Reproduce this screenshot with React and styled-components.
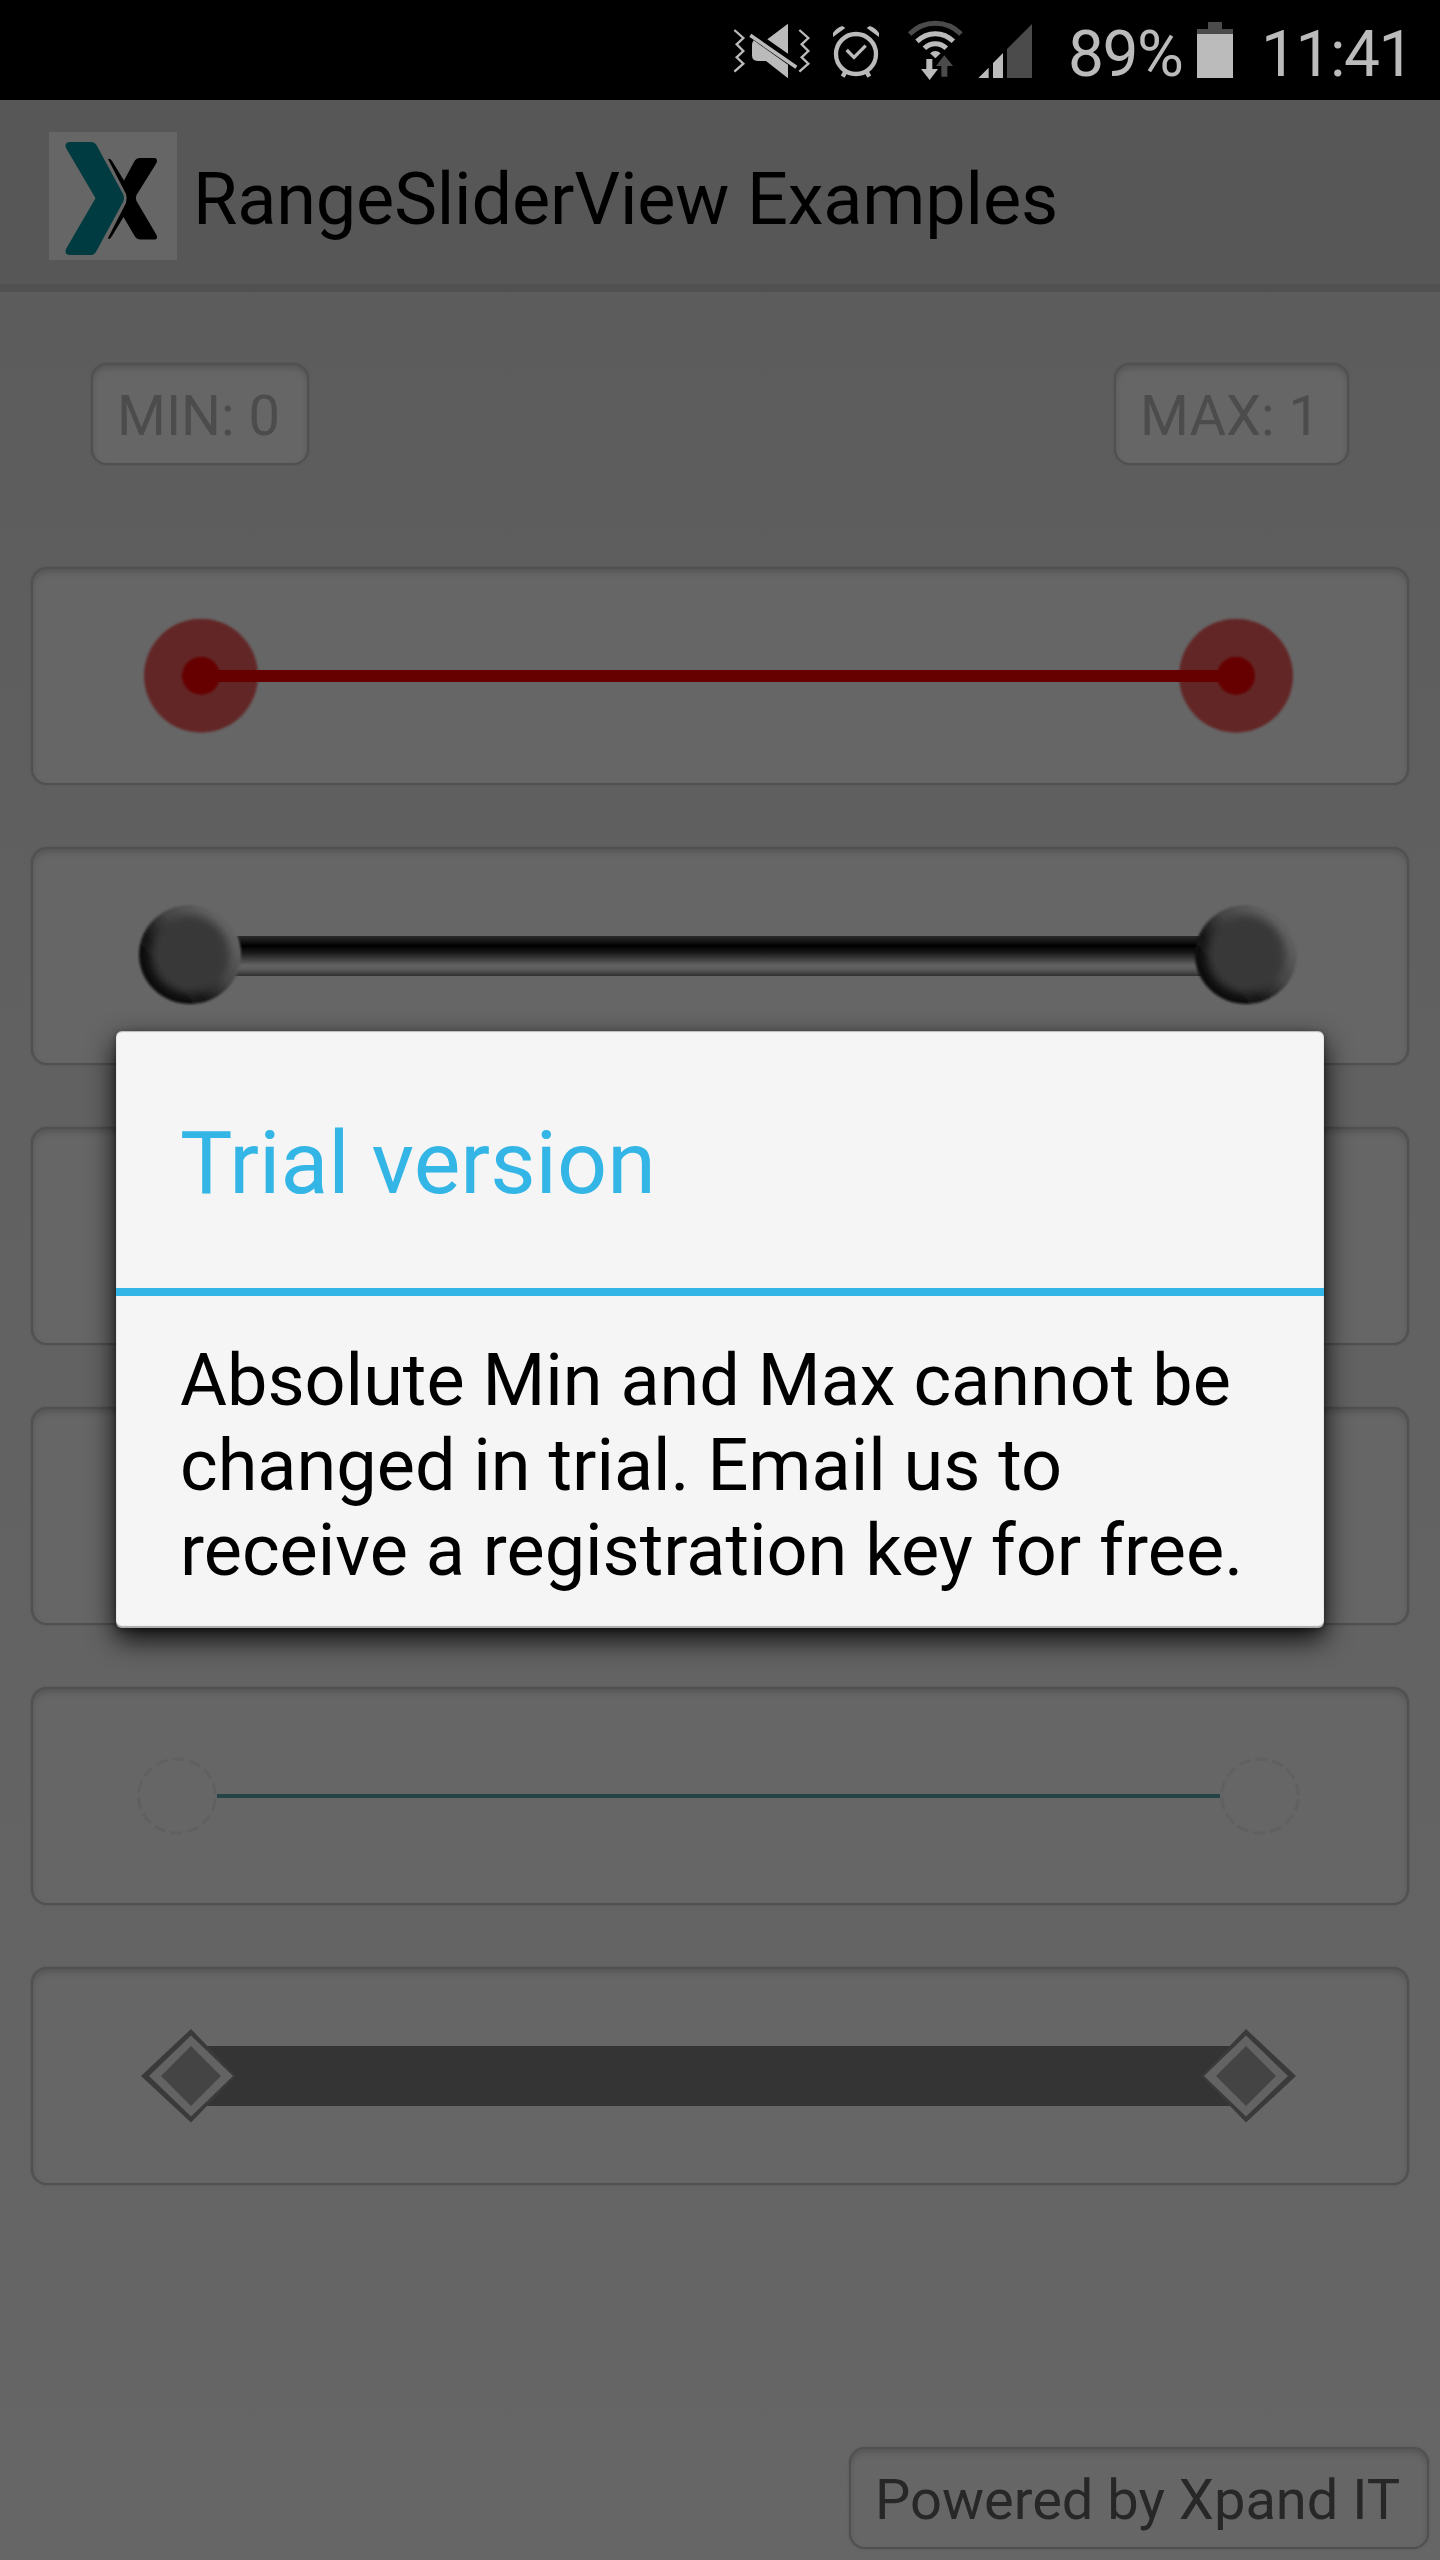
import React from "react";
import styled, { createGlobalStyle } from "styled-components";

const GlobalStyle = createGlobalStyle`
  *, *::before, *::after { box-sizing: border-box; }
  body { margin: 0; background: #000; }
  h1, h2, p { margin: 0; font-weight: 400; }
  svg { display: block; flex: none; }
`;

const Screen = styled.div`
  position: relative;
  display: flex;
  flex-direction: column;
  width: 1440px;
  height: 2560px;
  overflow: hidden;
  font-family: Roboto, "Liberation Sans", sans-serif;
  background: #626262;
`;

const StatusBar = styled.header`
  display: flex;
  align-items: flex-start;
  flex: none;
  height: 100px;
  padding: 20px 0 0 733px;
  background: #000;
  color: #bbb;
`;

const StatusGlyph = styled.svg`
  width: ${(p) => p.$width}px;
  height: 61px;
  margin-right: ${(p) => p.$gap}px;
`;

const StatusText = styled.span`
  flex: none;
  width: ${(p) => p.$width}px;
  font-size: 64px;
  line-height: 75px;
  letter-spacing: -1.5px;
  margin-top: -3px;
  white-space: nowrap;
`;

const ActionBar = styled.div`
  display: flex;
  align-items: center;
  flex: none;
  height: 192px;
  padding: 8px 0 0 49px;
  background: #575757;
  border-bottom: 8px solid #515151;
`;

const Logo = styled.svg`
  width: 128px;
  height: 128px;
  background: #666;
`;

const AppTitle = styled.h1`
  margin-left: 16px;
  padding-top: 7px;
  font-size: 72px;
  line-height: 84px;
  letter-spacing: -0.15px;
  color: #000;
  white-space: nowrap;
`;

const Content = styled.main`
  display: flex;
  flex-direction: column;
  flex: 1;
  padding: 71px 31px 11px;
  background: linear-gradient(#5c5c5c, #616161 35%, #666);
`;

const LimitsRow = styled.div`
  display: flex;
  justify-content: space-between;
  padding: 0 60px;
  margin-bottom: 102px;
`;

const Panel = styled.div`
  border: 2px solid #505050;
  border-radius: 16px;
  background: #666;
  box-shadow: inset 0 4px 6px -1px rgba(0, 0, 0, 0.18), 0 0 2px #505050;
`;

const Button = styled(Panel).attrs({ as: "button", type: "button" })`
  height: 102px;
  width: ${(p) => p.$width}px;
  padding: 3px 0 0 ${(p) => p.$inset}px;
  font: 400 56px/95px Roboto, "Liberation Sans", sans-serif;
  text-align: left;
  white-space: nowrap;
  color: ${(p) => p.$color};
`;

const ButtonLabel = styled.span`
  display: block;
  padding-top: 1px;
`;

const SliderList = styled.div`
  display: flex;
  flex-direction: column;
  gap: 62px;
`;

const SliderCard = styled(Panel)`
  display: flex;
  align-items: center;
  height: 218px;
`;

const SliderArt = styled.svg`
  width: 1374px;
  height: 214px;
`;

const Footer = styled.footer`
  display: flex;
  justify-content: flex-end;
  margin: auto -20px 0 0;
`;

const Dialog = styled.section`
  position: absolute;
  left: 116px;
  top: 1031px;
  width: 1208px;
  height: 597px;
  display: flex;
  flex-direction: column;
  border-radius: 6px;
  background: #f5f5f5;
  box-shadow: inset 0 -2px 1px rgba(0, 0, 0, 0.3), inset 0 1px 1px rgba(0, 0, 0, 0.25),
    0 11px 28px rgba(0, 0, 0, 0.9), 0 2px 6px rgba(0, 0, 0, 0.35);
`;

const DialogTitle = styled.h2`
  display: flex;
  align-items: center;
  height: 265px;
  padding: 6px 64px 0;
  font-size: 88px;
  color: #33b5e5;
  border-bottom: 8px solid #33b5e5;
`;

const DialogBody = styled.p`
  padding: 42px 64px 0;
  font-size: 72px;
  line-height: 85px;
  color: #000;
`;

const VibrateMuteIcon = () => (
  <StatusGlyph $width={78} $gap={21} viewBox="39 60 234 183" aria-hidden="true">
    <g fill="none" stroke="#bbb" strokeWidth="7">
      <path d="M43 90 70 114 50 133 70 153 50 172 70 191 43 215" />
      <path d="M238 90 265 114 245 133 265 153 245 172 265 191 238 215" />
      <path d="M91 106 229 202" strokeWidth="11" />
    </g>
    <path d="M204 71V161L142 118Z" fill="#bbb" />
    <path d="M101 121 204 194V235L138 183H113Q96 183 96 166V137Q96 127 101 121Z" fill="#bbb" />
  </StatusGlyph>
);

const AlarmIcon = () => (
  <StatusGlyph $width={48} $gap={27} viewBox="336 60 144 183" aria-hidden="true">
    <g fill="none" stroke="#bbb">
      <circle cx="408" cy="162" r="60" strokeWidth="13" />
      <path d="M380 150 402 172 437 137" strokeWidth="10" />
      <path d="M377 214 368 230M439 214 448 230" strokeWidth="13" />
    </g>
    <path d="M339 111V99Q350 83 367 78L376 84ZM477 111V99Q466 83 449 78L440 84Z" fill="#bbb" />
  </StatusGlyph>
);

const WifiIcon = () => (
  <StatusGlyph $width={56} $gap={14} viewBox="561 60 168 183" aria-hidden="true">
    <g fill="none" strokeWidth="15">
      <path d="M569 102Q602 70 646 70T723 102" stroke="#4b4b4b" />
      <path d="M591 124Q615 101 646 101T700 124" stroke="#bbb" />
      <path d="M613 145Q627 131 646 131T679 145" stroke="#bbb" />
    </g>
    <path d="M630 160Q646 146 662 160L646 175Z" fill="#bbb" />
    <path d="M673 166 699 198H682V230H664V198H648Z" fill="#4b4b4b" />
    <path d="M619 177H637V207H654L629 240 603 207H619Z" fill="#bbb" />
  </StatusGlyph>
);

const SignalIcon = () => (
  <StatusGlyph $width={56} $gap={35} viewBox="771 60 168 183" aria-hidden="true">
    <path d="M775 234 806 203V234ZM819 234V189L849 159V234Z" fill="#bbb" />
    <path d="M861 234V147L936 72V234Z" fill="#4b4b4b" />
  </StatusGlyph>
);

const BatteryIcon = () => (
  <StatusGlyph $width={36} $gap={28} viewBox="471 60 108 183" aria-hidden="true">
    <path d="M504 66H546V87H579V102H471V87H504Z" fill="#4b4b4b" />
    <path d="M471 102H579V234H471Z" fill="#bbb" />
  </StatusGlyph>
);

const XpandLogo = () => (
  <Logo viewBox="0 0 128 128" role="img" aria-label="Xpand IT">
    <path
      d="M20 10H42Q46 10 48 14L74 62Q76 66.300 74 70L48 118Q46 123 42 123H20Q15 122 17 117L46.500 66.300 17 16Q15 11 20 10Z"
      fill="#003b41"
    />
    <path
      d="M59 27Q61 26 63 29L75 48.500 85 30Q87 26 91 26H106Q109 27 107.500 31L87.500 63Q86 66.300 87.500 69L107.500 103Q109 107 106 107.500H91Q87 107 85 103L74.500 85 63 104Q60 109 59 106L77 71Q78.500 66.300 77 62Z"
      fill="#000"
    />
  </Logo>
);

const RedSlider = () => (
  <SliderArt viewBox="33 569 1374 214">
    <defs>
      <filter id="softDot" x="-10%" y="-10%" width="120%" height="120%">
        <feGaussianBlur stdDeviation="1.1" />
      </filter>
    </defs>
    {[201, 1236].map((x) => (
      <circle key={x} cx={x} cy="675.700" r="57" fill="#642828" filter="url(#softDot)" />
    ))}
    <path d="M201 670H1236V682H201Z" fill="#660000" />
    {[201, 1236].map((x) => (
      <circle key={x} cx={x} cy="675.700" r="19" fill="#660000" filter="url(#softDot)" />
    ))}
  </SliderArt>
);

const MetalSlider = () => (
  <SliderArt viewBox="33 849 1374 214">
    <defs>
      <linearGradient id="metalTrack" x1="0" y1="0" x2="0" y2="1">
        <stop offset="0" stopColor="#2b2b2b" />
        <stop offset="0.25" stopColor="#000" />
        <stop offset="0.42" stopColor="#191919" />
        <stop offset="0.73" stopColor="#626262" />
        <stop offset="0.83" stopColor="#5c5c5c" />
        <stop offset="1" stopColor="#303030" />
      </linearGradient>
      <linearGradient id="metalRim" x1="0.16" y1="0.8" x2="0.84" y2="0.2">
        <stop offset="0" stopColor="#0a0a0a" />
        <stop offset="0.28" stopColor="#161616" />
        <stop offset="0.6" stopColor="#464646" />
        <stop offset="1" stopColor="#646464" />
      </linearGradient>
      <filter id="softFace" x="-20%" y="-20%" width="140%" height="140%">
        <feGaussianBlur stdDeviation="4.500" />
      </filter>
      <filter id="softEdge" x="-10%" y="-10%" width="120%" height="120%">
        <feGaussianBlur stdDeviation="0.8" />
      </filter>
    </defs>
    <path d="M225 936H1212V976H225Z" fill="url(#metalTrack)" />
    {[190, 1246].map((x) => (
      <g key={x}>
        <ellipse cx={x} cy="954.500" rx="51" ry="49.500" fill="url(#metalRim)" filter="url(#softEdge)" />
        <circle cx={x} cy="954.500" r="39" fill="#393939" filter="url(#softFace)" />
      </g>
    ))}
  </SliderArt>
);

const DashedSlider = () => (
  <SliderArt viewBox="33 1689 1374 214">
    <path d="M217 1794H1220V1798H217Z" fill="#264446" />
    {[177, 1260].map((x) => (
      <ellipse
        key={x}
        cx={x}
        cy="1796"
        rx="38.500"
        ry="37"
        fill="none"
        stroke="#606060"
        strokeWidth="3"
        strokeDasharray="12 5"
        strokeDashoffset="-3"
      />
    ))}
  </SliderArt>
);

const diamonds = [
  { x: 191, left: 50, right: 45 },
  { x: 1246, left: 45, right: 50 },
];

const DiamondSlider = () => (
  <SliderArt viewBox="33 1969 1374 214">
    <path d="M191 2046H1246V2106H191Z" fill="#343434" />
    {diamonds.map(({ x, left, right }) => (
      <g key={x}>
        <path d={`M${x} 2029 ${x + right} 2076 ${x} 2122.500 ${x - left} 2076Z`} fill="#3a3a3a" />
        <path d={`M${x} 2035.500 ${x + 42} 2076 ${x} 2116.500 ${x - 42} 2076Z`} fill="#636363" />
        <path d={`M${x} 2046 ${x + 30} 2076 ${x} 2106 ${x - 30} 2076Z`} fill="#444" />
      </g>
    ))}
  </SliderArt>
);

const sliders = [RedSlider, MetalSlider, null, null, DashedSlider, DiamondSlider];

export default function App() {
  return (
    <>
      <GlobalStyle />
      <Screen>
        <StatusBar>
          <VibrateMuteIcon />
          <AlarmIcon />
          <WifiIcon />
          <SignalIcon />
          <StatusText $width={129}>89%</StatusText>
          <BatteryIcon />
          <StatusText $width={150}>11:41</StatusText>
        </StatusBar>
        <ActionBar>
          <XpandLogo />
          <AppTitle>RangeSliderView Examples</AppTitle>
        </ActionBar>
        <Content>
          <LimitsRow>
            <Button $width={218} $inset={24} $color="#4c4c4c">
              <ButtonLabel>MIN: 0</ButtonLabel>
            </Button>
            <Button $width={235} $inset={24} $color="#4c4c4c">
              <ButtonLabel>MAX: 1</ButtonLabel>
            </Button>
          </LimitsRow>
          <SliderList>
            {sliders.map((Slider, i) => (
              <SliderCard key={i}>{Slider && <Slider />}</SliderCard>
            ))}
          </SliderList>
          <Footer>
            <Button $width={580} $inset={24} $color="#272727">
              <ButtonLabel>Powered by Xpand IT</ButtonLabel>
            </Button>
          </Footer>
        </Content>
        <Dialog role="dialog" aria-labelledby="dialog-title">
          <DialogTitle id="dialog-title">Trial version</DialogTitle>
          <DialogBody>
            Absolute Min and Max cannot be changed in trial. Email us to receive a registration key for free.
          </DialogBody>
        </Dialog>
      </Screen>
    </>
  );
}
